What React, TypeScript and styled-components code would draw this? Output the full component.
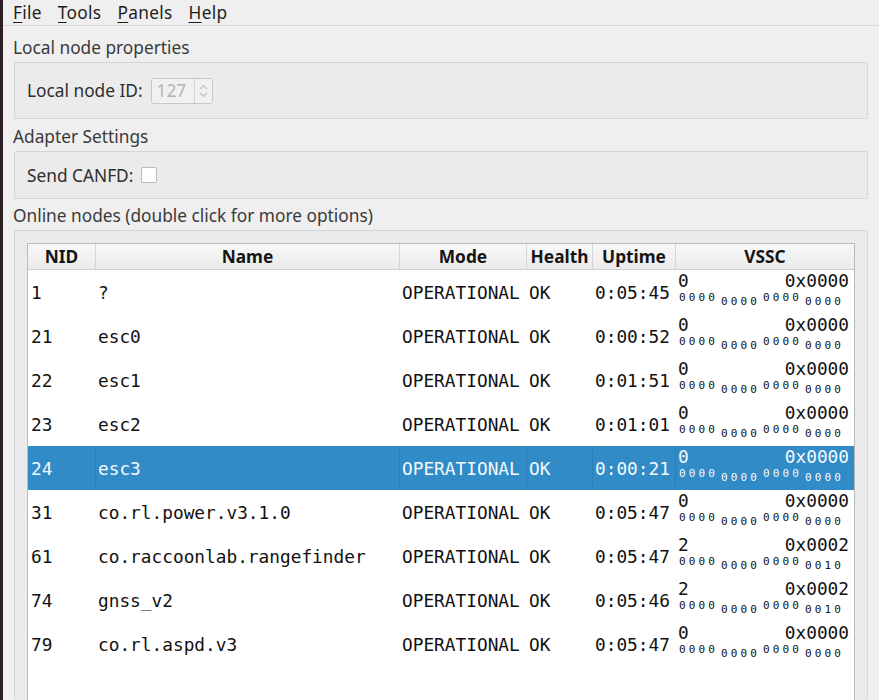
import styled, { createGlobalStyle } from "styled-components";

const GlobalStyle = createGlobalStyle`
  html, body {
    margin: 0;
    padding: 0;
    background: #efefef;
    overflow: hidden;
  }
  body {
    font-family: "Noto Sans", "DejaVu Sans", sans-serif;
    color: #3c3c3c;
  }
`;

type Node = {
  nid: number;
  name: string;
  mode: string;
  health: string;
  uptime: string;
  vssc: number;
  selected?: boolean;
};

const nodes: Node[] = [
  { nid: 1, name: "?", mode: "OPERATIONAL", health: "OK", uptime: "0:05:45", vssc: 0 },
  { nid: 21, name: "esc0", mode: "OPERATIONAL", health: "OK", uptime: "0:00:52", vssc: 0 },
  { nid: 22, name: "esc1", mode: "OPERATIONAL", health: "OK", uptime: "0:01:51", vssc: 0 },
  { nid: 23, name: "esc2", mode: "OPERATIONAL", health: "OK", uptime: "0:01:01", vssc: 0 },
  { nid: 24, name: "esc3", mode: "OPERATIONAL", health: "OK", uptime: "0:00:21", vssc: 0, selected: true },
  { nid: 31, name: "co.rl.power.v3.1.0", mode: "OPERATIONAL", health: "OK", uptime: "0:05:47", vssc: 0 },
  { nid: 61, name: "co.raccoonlab.rangefinder", mode: "OPERATIONAL", health: "OK", uptime: "0:05:47", vssc: 2 },
  { nid: 74, name: "gnss_v2", mode: "OPERATIONAL", health: "OK", uptime: "0:05:46", vssc: 2 },
  { nid: 79, name: "co.rl.aspd.v3", mode: "OPERATIONAL", health: "OK", uptime: "0:05:47", vssc: 0 },
];

const Window = styled.div`
  display: flex;
  height: 700px;
`;

const Edge = styled.div`
  width: 3px;
  flex: none;
  background: #2c1e25;
`;

const Main = styled.div`
  flex: 1;
  display: flex;
  flex-direction: column;
  min-width: 0;
`;

const MenuBar = styled.div`
  height: 25px;
  display: flex;
  align-items: center;
  gap: 16px;
  padding: 0 10px;
  border-bottom: 1px solid #d6d6d6;
  font-size: 17.3px;
  color: #1e1e1e;
`;

const MenuItem = styled.span`
  padding-bottom: 1px;
  letter-spacing: 0.3px;
  u {
    text-decoration-thickness: 1px;
    text-underline-offset: 3px;
  }
`;

const Content = styled.div`
  flex: 1;
  display: flex;
  flex-direction: column;
  padding: 0 11px;
  min-height: 0;
`;

const SectionLabel = styled.div<{ $top: number }>`
  margin-top: ${(p) => p.$top}px;
  height: 22px;
  line-height: 22px;
  margin-left: -1px;
  font-size: 17.3px;
  color: #3a3a3a;
  margin-bottom: 3px;
`;

const Group = styled.div<{ $height?: number }>`
  border: 1px solid #d5d5d5;
  border-radius: 2px;
  background: #ebebeb;
  ${(p) => (p.$height ? `height: ${p.$height}px;` : "flex: 1;")}
  box-sizing: border-box;
  display: flex;
  align-items: center;
  gap: 8px;
  padding: 0 12px;
`;

const TableGroup = styled(Group)`
  align-items: stretch;
  padding: 12px 12px 0 12px;
  border-bottom: none;
  min-height: 0;
`;

const FieldLabel = styled.span`
  font-size: 17.3px;
  color: #2e2e2e;
`;

const SpinBox = styled.div`
  display: flex;
  width: 62px;
  height: 26px;
  box-sizing: border-box;
  border: 1px solid #c9c9c9;
  border-radius: 3px;
  background: #f1f1f1;
`;

const SpinValue = styled.span`
  flex: 1;
  display: flex;
  align-items: center;
  padding-left: 5px;
  font-size: 17.3px;
  color: #b4b4b4;
  border-right: 1px solid #d4d4d4;
`;

const SpinArrows = styled.svg`
  width: 17px;
  height: 24px;
`;

const CheckBox = styled.span`
  width: 16px;
  height: 16px;
  box-sizing: border-box;
  border: 1px solid #b9b9b9;
  border-radius: 2px;
  background: #fff;
`;

const Table = styled.div`
  flex: 1;
  background: #fff;
  border: 1px solid #b9b9b9;
  border-bottom: none;
  display: flex;
  flex-direction: column;
`;

const cols = "67px 304px 127px 66px 83px 1fr";

const HeaderRow = styled.div`
  display: grid;
  grid-template-columns: ${cols};
  height: 25px;
  background: linear-gradient(#f8f8f8, #ebebeb);
  border-bottom: 1px solid #cfcfcf;
`;

const HeaderCell = styled.div<{ $first?: boolean }>`
  display: flex;
  align-items: center;
  justify-content: center;
  font-weight: bold;
  font-size: 17.3px;
  color: #151515;
  border-left: ${(p) => (p.$first ? "none" : "1px solid #d6d6d6")};
`;

const Row = styled.div<{ $selected?: boolean }>`
  display: grid;
  grid-template-columns: ${cols};
  height: 44px;
  background: ${(p) => (p.$selected ? "#308bc6" : "#fff")};
  color: ${(p) => (p.$selected ? "#f4f9fd" : "#111")};
  font-family: "DejaVu Sans Mono", monospace;
  font-size: 17.8px;
`;

const Cell = styled.div<{ $selected?: boolean; $first?: boolean }>`
  display: flex;
  align-items: center;
  padding: 0 3px 0 2px;
  white-space: nowrap;
  overflow: hidden;
  border-left: 1px solid
    ${(p) => (p.$selected && !p.$first ? "#2a7db5" : "transparent")};
`;

const VsscCell = styled(Cell)`
  flex-direction: column;
  align-items: stretch;
  justify-content: flex-start;
  padding: 1px 5px 0 2px;
`;

const VsscTop = styled.div`
  display: flex;
  justify-content: space-between;
  line-height: 20px;
`;

const Bits = styled.div`
  display: flex;
  font-size: 11px;
  letter-spacing: 3.1px;
  height: 16px;
  margin-left: 1px;
`;

const BitGroup = styled.span<{ $low: boolean }>`
  width: 42px;
  padding-top: ${(p) => (p.$low ? 5 : 1)}px;
  line-height: 11px;
`;

function VsscValue({ value, selected }: { value: number; selected?: boolean }) {
  const bin = value.toString(2).padStart(16, "0");
  const groups = [bin.slice(0, 4), bin.slice(4, 8), bin.slice(8, 12), bin.slice(12, 16)];
  const hex = "0x" + value.toString(16).toUpperCase().padStart(4, "0");
  return (
    <VsscCell $selected={selected}>
      <VsscTop>
        <span>{value}</span>
        <span>{hex}</span>
      </VsscTop>
      <Bits>
        {groups.map((g, i) => (
          <BitGroup key={i} $low={i % 2 === 1}>
            {g}
          </BitGroup>
        ))}
      </Bits>
    </VsscCell>
  );
}

export default function App() {
  return (
    <>
      <GlobalStyle />
      <Window>
        <Edge />
        <Main>
          <MenuBar>
            <MenuItem>
              <u>F</u>ile
            </MenuItem>
            <MenuItem>
              <u>T</u>ools
            </MenuItem>
            <MenuItem>
              <u>P</u>anels
            </MenuItem>
            <MenuItem>
              <u>H</u>elp
            </MenuItem>
          </MenuBar>
          <Content>
            <SectionLabel $top={11}>Local node properties</SectionLabel>
            <Group $height={57}>
              <FieldLabel>Local node ID:</FieldLabel>
              <SpinBox>
                <SpinValue>127</SpinValue>
                <SpinArrows viewBox="0 0 17 24">
                  <path d="M5 10 L8.5 6.5 L12 10" fill="none" stroke="#c4c4c4" strokeWidth="1.3" />
                  <path d="M5 14 L8.5 17.5 L12 14" fill="none" stroke="#c4c4c4" strokeWidth="1.3" />
                </SpinArrows>
              </SpinBox>
            </Group>
            <SectionLabel $top={7}>Adapter Settings</SectionLabel>
            <Group $height={48}>
              <FieldLabel>Send CANFD:</FieldLabel>
              <CheckBox />
            </Group>
            <SectionLabel $top={6}>Online nodes (double click for more options)</SectionLabel>
            <TableGroup>
              <Table>
                <HeaderRow>
                  <HeaderCell $first>NID</HeaderCell>
                  <HeaderCell>Name</HeaderCell>
                  <HeaderCell>Mode</HeaderCell>
                  <HeaderCell>Health</HeaderCell>
                  <HeaderCell>Uptime</HeaderCell>
                  <HeaderCell>VSSC</HeaderCell>
                </HeaderRow>
                {nodes.map((n) => (
                  <Row key={n.nid} $selected={n.selected}>
                    <Cell $selected={n.selected} $first>
                      {n.nid}
                    </Cell>
                    <Cell $selected={n.selected}>{n.name}</Cell>
                    <Cell $selected={n.selected}>{n.mode}</Cell>
                    <Cell $selected={n.selected}>{n.health}</Cell>
                    <Cell $selected={n.selected}>{n.uptime}</Cell>
                    <VsscValue value={n.vssc} selected={n.selected} />
                  </Row>
                ))}
              </Table>
            </TableGroup>
          </Content>
        </Main>
      </Window>
    </>
  );
}
